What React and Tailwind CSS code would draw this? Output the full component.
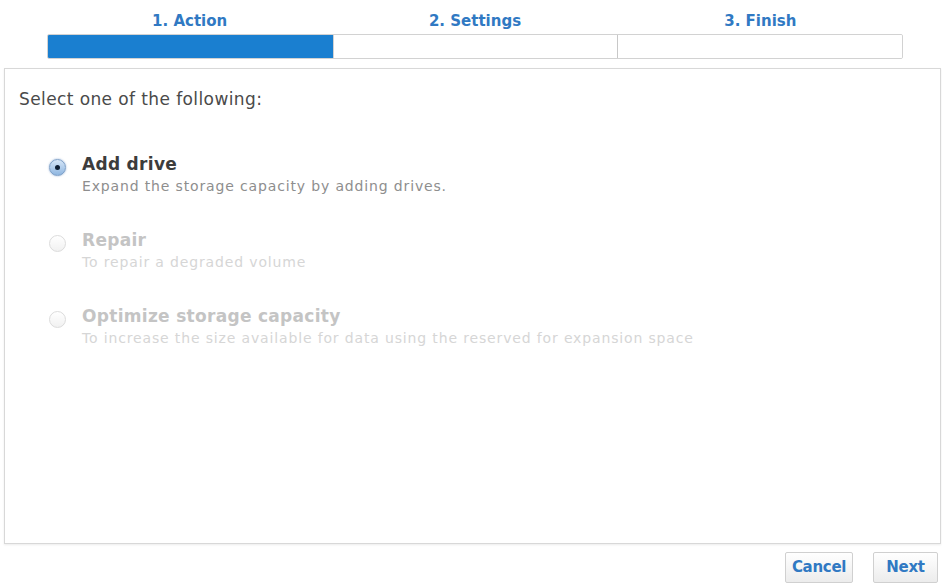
import React from "react";

const steps = ["1. Action", "2. Settings", "3. Finish"];

const options = [
  { title: "Add drive", desc: "Expand the storage capacity by adding drives.", selected: true },
  { title: "Repair", desc: "To repair a degraded volume" },
  { title: "Optimize storage capacity", desc: "To increase the size available for data using the reserved for expansion space" },
];

const Radio = ({ selected }) =>
  selected ? (
    <div className="flex h-[17px] w-[17px] items-center justify-center rounded-full border border-[#7d9fc7] bg-gradient-to-b from-[#d6e6f7] to-[#8fb6e0] shadow-[0_0_2px_rgba(60,110,180,0.6)]">
      <div className="h-[5px] w-[5px] rounded-full bg-[#0e1e33]" />
    </div>
  ) : (
    <div className="h-[17px] w-[17px] rounded-full border border-[#dcdcdc] bg-gradient-to-b from-white to-[#f1f1f1]" />
  );

const App = () => {
  return (
    <div className="h-[584px] w-[942px] overflow-hidden bg-white font-['DejaVu_Sans',Verdana,sans-serif]">
      <div className="ml-[47px] w-[856px] pt-[10px]">
        <div className="grid grid-cols-3">
          {steps.map((s) => (
            <p key={s} className="text-center text-[15px] font-bold leading-[22px] text-[#3079c3]">
              {s}
            </p>
          ))}
        </div>
        <div className="mt-[2px] grid h-[25px] grid-cols-3 overflow-hidden rounded-[2px] border border-[#d2d2d2] shadow-[inset_0_1px_1px_rgba(0,0,0,0.05)]">
          <div className="bg-[#1a7fd0]" />
          <div className="border-l border-[#d2d2d2] bg-white" />
          <div className="border-l border-[#c8c8c8] bg-white" />
        </div>
      </div>

      <div className="ml-[4px] mt-[9px] h-[476px] w-[937px] border border-[#d8d8d8] bg-white px-[14px] pt-[19px] shadow-[0_1px_2px_rgba(0,0,0,0.08)]">
        <p className="text-[17px] leading-[22px] tracking-[0.4px] text-[#4a4a4a]">Select one of the following:</p>
        <div className="mt-[43px] flex flex-col gap-[32px] pl-[30px]">
          {options.map((o) => (
            <div key={o.title} className="flex items-start gap-[16px]">
              <div className="pt-[6px]">
                <Radio selected={o.selected} />
              </div>
              <div>
                <p className={`text-[17px] font-bold leading-[22px] tracking-[0.3px] ${o.selected ? "text-[#3c3c3c]" : "text-[#c4c4c4]"}`}>
                  {o.title}
                </p>
                <p className={`text-[14px] leading-[22px] tracking-[0.85px] ${o.selected ? "text-[#8e8e8e]" : "text-[#d6d6d6]"}`}>
                  {o.desc}
                </p>
              </div>
            </div>
          ))}
        </div>
      </div>

      <div className="mr-[4px] mt-[8px] flex justify-end gap-[20px]">
        <button className="h-[31px] w-[68px] rounded-[2px] border border-[#d0d0d0] bg-gradient-to-b from-white to-[#ececec] text-[15px] font-bold tracking-[-0.3px] text-[#3079c3]">
          Cancel
        </button>
        <button className="h-[31px] w-[65px] rounded-[2px] border border-[#d0d0d0] bg-gradient-to-b from-white to-[#ececec] text-[15px] font-bold tracking-[-0.3px] text-[#3079c3]">
          Next
        </button>
      </div>
    </div>
  );
};

export default App;
